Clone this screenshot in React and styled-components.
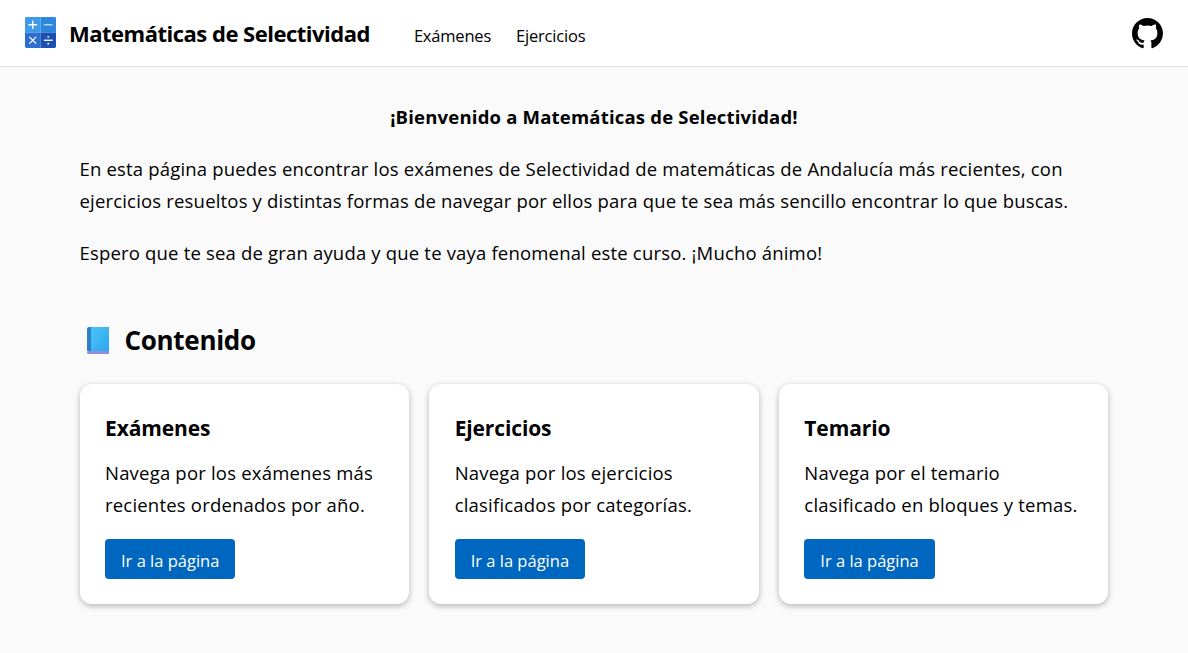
import styled, { createGlobalStyle } from "styled-components";
import { BsGithub } from "react-icons/bs";

const GlobalStyle = createGlobalStyle`
  html, body {
    margin: 0;
    padding: 0;
    background-color: #fafafa;
    font-family: "Open Sans", "Noto Sans", sans-serif;
    color: #000;
  }
`;

const Header = styled.header`
  display: flex;
  align-items: center;
  height: 66px;
  padding: 0 24px 0 25px;
  background-color: #fff;
  border-bottom: 1px solid #e0e0e0;
`;

const Brand = styled.a`
  display: flex;
  align-items: center;
  gap: 13px;
  font-size: 22px;
  font-weight: 700;
  letter-spacing: -0.5px;
  margin-right: 44px;
`;

const Nav = styled.nav`
  display: flex;
  gap: 25px;
  flex: 1;
  padding-top: 4px;
`;

const NavLink = styled.a`
  font-size: 16.5px;
  letter-spacing: -0.2px;
`;

const GithubLink = styled.a`
  display: flex;
  margin-right: 1px;
  font-size: 31px;
`;

const Main = styled.main`
  width: 1029px;
  margin-left: 79.5px;
  padding: 36px 0 40px;
`;

const Welcome = styled.h1`
  margin: 0 0 22px;
  font-size: 18.5px;
  line-height: 28px;
  font-weight: 700;
  text-align: center;
  letter-spacing: 0.2px;
`;

const Text = styled.p`
  margin: 0 0 20px;
  font-size: 18.5px;
  line-height: 32px;
  letter-spacing: 0.18px;
`;

const SectionTitle = styled.h2`
  display: flex;
  align-items: center;
  gap: 16px;
  margin: 53px 0 26px 7px;
  font-size: 26px;
  line-height: 36px;
  font-weight: 700;
  letter-spacing: -0.3px;
`;

const Cards = styled.div`
  display: grid;
  grid-template-columns: repeat(3, 1fr);
  gap: 20px;
`;

const Card = styled.section`
  padding: 26px 25.5px 25px;
  background-color: #fff;
  border-radius: 12px;
  box-shadow: 0 2px 6px rgba(0, 0, 0, 0.28);
`;

const CardTitle = styled.h3`
  margin: 0 0 11px;
  font-size: 21px;
  line-height: 36px;
  font-weight: 700;
  letter-spacing: -0.12px;
`;

const CardText = styled.p`
  margin: 0 0 18px;
  font-size: 18.5px;
  line-height: 32px;
  letter-spacing: 0.2px;
`;

const CardButton = styled.a`
  display: inline-block;
  padding: 0 16px;
  height: 40px;
  line-height: 43px;
  font-size: 16.5px;
  color: #fff;
  background-color: #0067c0;
  border-radius: 4px;
`;

const CalculatorSvg = styled.svg`
  width: 31px;
  height: 31px;
  margin-top: -1px;
`;

function CalculatorIcon() {
  return (
    <CalculatorSvg viewBox="0 0 32 32" aria-hidden="true">
      <defs>
        <clipPath id="calc-corners">
          <rect width="32" height="32" rx="1.500" />
        </clipPath>
      </defs>
      <g clipPath="url(#calc-corners)">
        <rect width="16" height="16" fill="#3f9be8" />
        <rect x="16" width="16" height="16" fill="#2f86dd" />
        <rect y="16" width="16" height="16" fill="#2c6fd1" />
        <rect x="16" y="16" width="16" height="16" fill="#1b4fb1" />
      </g>
      <g stroke="#fff" strokeWidth="1.400" fill="none">
        <path d="M3.500 8h9M8 3.500v9" />
        <path d="M19.500 8h9" opacity="0.7" />
        <path d="M4.500 20.500l7 7M11.500 20.500l-7 7" />
        <path d="M19.500 24h9" />
      </g>
      <circle cx="24" cy="20.500" r="1" fill="#fff" />
      <circle cx="24" cy="27.500" r="1" fill="#fff" />
    </CalculatorSvg>
  );
}

function BookIcon() {
  return (
    <svg width="22" height="27" viewBox="0 0 22 27" aria-hidden="true">
      <defs>
        <linearGradient id="cover" x1="0" y1="0" x2="1" y2="1">
          <stop offset="0" stopColor="#4cc6f7" />
          <stop offset="1" stopColor="#2ea6ee" />
        </linearGradient>
      </defs>
      <path d="M2 0h20v24H2z" fill="url(#cover)" />
      <path d="M2 0h2v24H0V2a2 2 0 0 1 2-2z" fill="#2f7fc8" />
      <path d="M0 25.500a1.500 1.500 0 0 1 1.500-1.500H22v3H1.500A1.500 1.500 0 0 1 0 25.500z" fill="#8d8fdc" />
    </svg>
  );
}

const cards = [
  { title: "Exámenes", text: ["Navega por los exámenes más", "recientes ordenados por año."] },
  { title: "Ejercicios", text: ["Navega por los ejercicios", "clasificados por categorías."] },
  { title: "Temario", text: ["Navega por el temario", "clasificado en bloques y temas."] },
];

export default function App() {
  return (
    <>
      <GlobalStyle />
      <Header>
        <Brand>
          <CalculatorIcon />
          Matemáticas de Selectividad
        </Brand>
        <Nav>
          <NavLink>Exámenes</NavLink>
          <NavLink>Ejercicios</NavLink>
        </Nav>
        <GithubLink>
          <BsGithub />
        </GithubLink>
      </Header>
      <Main>
        <Welcome>¡Bienvenido a Matemáticas de Selectividad!</Welcome>
        <Text>
          En esta página puedes encontrar los exámenes de Selectividad de matemáticas de Andalucía más recientes, con
          ejercicios resueltos y distintas formas de navegar por ellos para que te sea más sencillo encontrar lo que
          buscas.
        </Text>
        <Text>Espero que te sea de gran ayuda y que te vaya fenomenal este curso. ¡Mucho ánimo!</Text>
        <SectionTitle>
          <BookIcon />
          Contenido
        </SectionTitle>
        <Cards>
          {cards.map((card) => (
            <Card key={card.title}>
              <CardTitle>{card.title}</CardTitle>
              <CardText>
                {card.text[0]}
                <br />
                {card.text[1]}
              </CardText>
              <CardButton>Ir a la página</CardButton>
            </Card>
          ))}
        </Cards>
      </Main>
    </>
  );
}
